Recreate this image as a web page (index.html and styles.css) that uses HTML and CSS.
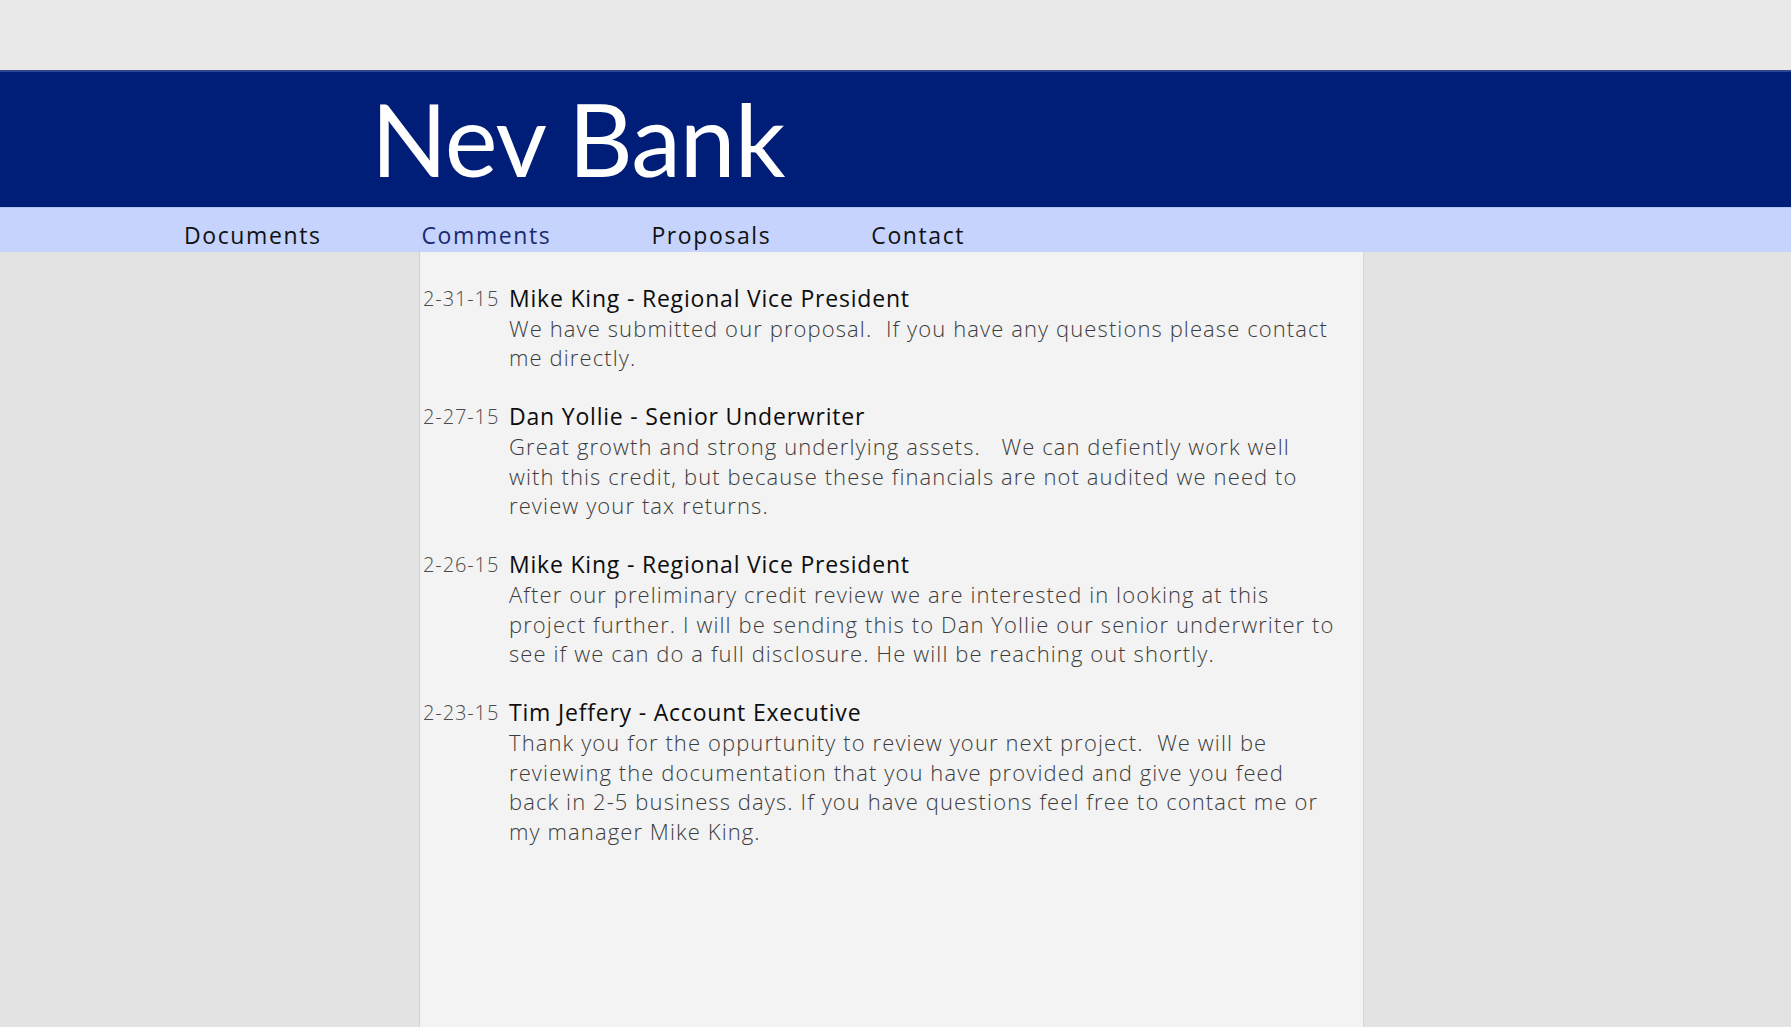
FILE: index.html
```html
<!DOCTYPE html>
<html>
<head>
<meta charset="utf-8">
<link rel="stylesheet" href="styles.css">
</head>
<body>
<div class="topband"></div>
<header class="brand">
  <h1 class="brand-title">Nev Bank</h1>
</header>
<nav class="nav">
  <a class="nav-item">Documents</a>
  <a class="nav-item active">Comments</a>
  <a class="nav-item">Proposals</a>
  <a class="nav-item">Contact</a>
</nav>
<main class="main">
  <section class="panel">
    <div class="comment">
      <div class="date">2-31-15</div>
      <div class="content">
        <div class="author">Mike King - Regional Vice President</div>
        <div class="body">We have submitted our proposal.&nbsp; If you have any questions please contact me directly.</div>
      </div>
    </div>
    <div class="comment">
      <div class="date">2-27-15</div>
      <div class="content">
        <div class="author">Dan Yollie - Senior Underwriter</div>
        <div class="body">Great growth and strong underlying assets.&nbsp;&nbsp; We can defiently work well with this credit, but because these financials are not audited we need to review your tax returns.</div>
      </div>
    </div>
    <div class="comment">
      <div class="date">2-26-15</div>
      <div class="content">
        <div class="author">Mike King - Regional Vice President</div>
        <div class="body">After our preliminary credit review we are interested in looking at this project further. I will be sending this to Dan Yollie our senior underwriter to see if we can do a full disclosure. He will be reaching out shortly.</div>
      </div>
    </div>
    <div class="comment">
      <div class="date">2-23-15</div>
      <div class="content">
        <div class="author">Tim Jeffery - Account Executive</div>
        <div class="body">Thank you for the oppurtunity to review your next project.&nbsp; We will be reviewing the documentation that you have provided and give you feed back in 2-5 business days. If you have questions feel free to contact me or my manager Mike King.</div>
      </div>
    </div>
  </section>
</main>
</body>
</html>
```

FILE: styles.css
```css
* { box-sizing: border-box; }
html, body {
  margin: 0;
  padding: 0;
  height: 100%;
}
body {
  background: #e3e3e3;
  font-family: "Open Sans", Lato, sans-serif;
  display: flex;
  flex-direction: column;
  overflow: hidden;
}
.topband {
  height: 70px;
  background: #e9e9e9;
  flex: none;
}
.brand {
  height: 137px;
  background: #001e78;
  border-top: 2px solid #2d4690;
  flex: none;
  display: flex;
  align-items: center;
  padding-left: 371px;
}
.brand-title {
  margin: 0;
  color: #ffffff;
  font-family: Lato, sans-serif;
  font-weight: 400;
  font-size: 100px;
  line-height: 1;
  letter-spacing: -1px;
  padding-bottom: 4px;
}
.nav {
  height: 45px;
  background: #c5d3fd;
  flex: none;
  display: flex;
  align-items: flex-end;
  gap: 100px;
  padding-left: 184px;
  padding-bottom: 5px;
  border-top: 1px solid #b3c3f0;
}
.nav-item {
  font-size: 23px;
  letter-spacing: 1.6px;
  color: #111111;
  line-height: 1;
}
.nav-item.active {
  color: #1b2a6e;
}
.main {
  flex: 1;
  display: flex;
  padding-left: 419px;
}
.panel {
  width: 945px;
  background: #f3f3f3;
  border-left: 1px solid #cfcfcf;
  border-right: 1px solid #d6d6d6;
  padding: 32px 26px 0 3px;
}
.comment {
  display: grid;
  grid-template-columns: 86px 1fr;
  margin-bottom: 29.6px;
  line-height: 29.6px;
}
.date {
  font-size: 20px;
  font-weight: 300;
  letter-spacing: 0.9px;
  color: #4a4a4a;
}
.author {
  font-size: 23px;
  font-weight: 500;
  letter-spacing: 0.8px;
  color: #0d0d0d;
}
.body {
  font-size: 22px;
  font-weight: 300;
  letter-spacing: 1.1px;
  color: #3c3c3c;
}
```
